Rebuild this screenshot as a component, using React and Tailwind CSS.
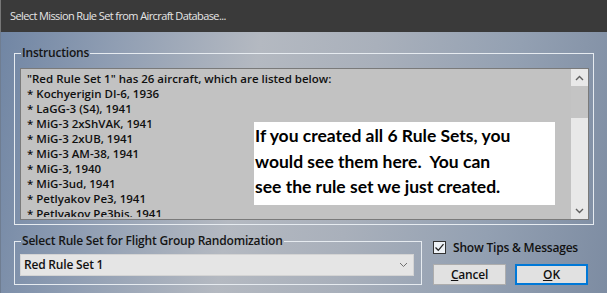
import React from "react";

const aircraft = [
  "Kochyerigin DI-6, 1936",
  "LaGG-3 (S4), 1941",
  "MiG-3 2xShVAK, 1941",
  "MiG-3 2xUB, 1941",
  "MiG-3 AM-38, 1941",
  "MiG-3, 1940",
  "MiG-3ud, 1941",
  "Petlyakov Pe3, 1941",
  "Petlyakov Pe3bis, 1941",
];

const Chevron = ({ up }) => (
  <svg width="9" height="6" viewBox="0 0 9 6" className={up ? "" : "rotate-180"}>
    <path d="M1 5 L4.5 1.5 L8 5" fill="none" stroke="#606060" strokeWidth="1.4" />
  </svg>
);

export default function App() {
  return (
    <div className="w-[607px] h-[293px] flex flex-col overflow-hidden font-['Open_Sans',sans-serif] text-[#111]">
      {/* title bar */}
      <div className="h-[32px] bg-[#3a3a3a] border-l border-[#777] flex items-center pl-[9px]">
        <span className="text-[11px] text-[#e6e6e6] tracking-[-0.6px]">
          Select Mission Rule Set from Aircraft Database...
        </span>
      </div>

      {/* body */}
      <div className="flex-1 border-l border-[#6f7d91] bg-[linear-gradient(100deg,#7186a4_0%,#909eb3_18%,#b4b9c1_40%,#a9b0bb_58%,#93a0b2_80%,#7d8ca2_100%)] pl-[13px] pt-[13px]">
        <fieldset className="w-[580px] border border-[#e6ebf0] pl-[5px] pr-[4px] pt-[7px] pb-[4px]">
          <legend className="text-[12px] font-semibold leading-[16px] px-[1px] ml-[1px] tracking-[-0.2px] text-[#151515]">
            Instructions
          </legend>
          <div className="relative h-[152px] border border-[#7a7a7a] bg-[#c2c2c2] flex overflow-hidden">
            <div className="flex-1 pb-[2px] flex flex-col">
              <div className="flex-1 pl-[6px] pt-[2px] text-[11.5px] font-semibold leading-[15px] text-[#101010] whitespace-nowrap overflow-hidden">
                <div>"Red Rule Set 1" has 26 aircraft, which are listed below:</div>
                {aircraft.map((a) => (
                  <div key={a}>* {a}</div>
                ))}
              </div>
            </div>
            {/* scrollbar */}
            <div className="w-[17px] bg-[#e8e8e8] flex flex-col">
              <div className="h-[17px] flex items-center justify-center">
                <Chevron up />
              </div>
              <div className="h-[32px] bg-[#c4c4c4]" />
              <div className="flex-1" />
              <div className="h-[17px] flex items-center justify-center">
                <Chevron />
              </div>
            </div>
            {/* callout */}
            <div className="absolute left-[233px] top-[53px] w-[301px] h-[83px] bg-white pl-[1px] pt-[1px] font-['Lato',sans-serif] font-bold text-[17.5px] leading-[25.5px] text-black">
              <div>If you created all 6 Rule Sets, you</div>
              <div>would see them here.&nbsp; You can</div>
              <div>see the rule set we just created.</div>
            </div>
          </div>
        </fieldset>

        <div className="flex mt-[8px]">
          <fieldset className="w-[408px] border border-[#e6ebf0] pl-[5px] pr-[7px] pt-[5px] pb-[6px]">
            <legend className="text-[12px] font-semibold leading-[16px] px-[1px] ml-[1px] tracking-[-0.2px] text-[#151515]">
              Select Rule Set for Flight Group Randomization
            </legend>
            <div className="h-[22px] bg-[#e5e5e5] border border-[#d4d4d4] flex items-center justify-between pl-[3px] pr-[5px]">
              <span className="text-[12px] font-semibold tracking-[-0.2px]">Red Rule Set 1</span>
              <svg width="9" height="6" viewBox="0 0 9 6">
                <path d="M1 1 L4.5 4.5 L8 1" fill="none" stroke="#707070" strokeWidth="1" />
              </svg>
            </div>
          </fieldset>

          <div className="ml-[11px] pt-[8px] flex flex-col">
            <div className="flex items-center gap-[7px] h-[13px]">
              <div className="w-[13px] h-[13px] border border-[#333] bg-[#eef2f7] flex items-center justify-center">
                <svg width="11" height="11" viewBox="0 0 11 11">
                  <path d="M1.5 5.5 L4.3 8.3 L9.5 2.2" fill="none" stroke="#222" strokeWidth="1.3" />
                </svg>
              </div>
              <span className="text-[12px] font-semibold tracking-[-0.2px]">Show Tips &amp; Messages</span>
            </div>
            <div className="flex gap-[9px] mt-[10px]">
              <button className="w-[73px] h-[21px] bg-[#e1e1e1] border border-[#adadad] text-[12px] font-semibold leading-none tracking-[-0.2px]">
                <span className="underline">C</span>ancel
              </button>
              <button className="w-[73px] h-[21px] bg-[#e1e1e1] border-2 border-[#0078d7] text-[12px] font-semibold leading-none">
                <span className="underline">O</span>K
              </button>
            </div>
          </div>
        </div>
      </div>
    </div>
  );
}
